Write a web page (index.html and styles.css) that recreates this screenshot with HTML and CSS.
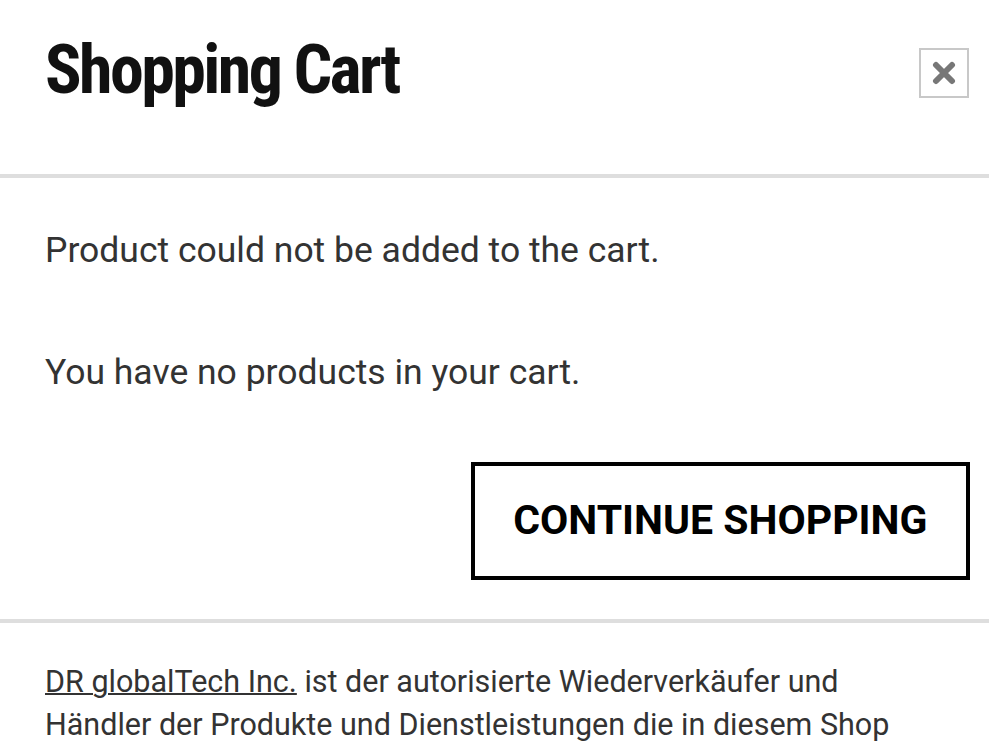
FILE: index.html
```
<!DOCTYPE html>
<html lang="en">
<head>
    <meta charset="UTF-8">
    <title>Shopping Cart</title>
    <link rel="stylesheet" href="styles.css">
</head>
<body>
    <div class="cart-modal">
        <div class="cart-header">
            <h2>Shopping Cart</h2>
            <button class="close-btn" type="button" aria-label="Close">
                <svg width="24" height="24" viewBox="0 0 24 24"><path d="M4 4L20 20M20 4L4 20" stroke="#777" stroke-width="6" stroke-linecap="round"/></svg>
            </button>
        </div>
        <div class="cart-body">
            <p class="notice">Product could not be added to the cart.</p>
            <p class="empty">You have no products in your cart.</p>
            <div class="actions">
                <a href="#" class="continue-btn">CONTINUE SHOPPING</a>
            </div>
        </div>
        <div class="cart-footer">
            <p><a href="#">DR globalTech Inc.</a> ist der autorisierte Wiederverkäufer und Händler der Produkte und Dienstleistungen die in diesem Shop angeboten werden.</p>
        </div>
    </div>
</body>
</html>
```

FILE: styles.css
```
:root { --text: #333; --line: #dedede; }
body { margin: 0; background: #fff; color: var(--text); font-family: Roboto, 'Noto Sans', sans-serif; }
.cart-modal { width: 100%; }
.cart-header { display: flex; justify-content: space-between; align-items: flex-start; height: 178px; padding: 36px 20px 0 45px; box-sizing: border-box; border-bottom: 4px solid var(--line); }
.cart-header h2 { margin: 0; font-family: Roboto, sans-serif; font-stretch: condensed; font-size: 68px; font-weight: 700; line-height: 1; letter-spacing: -2.6px; color: #111; }
.close-btn { width: 50px; height: 50px; padding: 0; margin-top: 12px; background: #fff; border: 2px solid #c8c8c8; display: flex; align-items: center; justify-content: center; cursor: pointer; }
.cart-body { padding: 45px 19px 39px 45px; }
.cart-body p { margin: 0; font-size: 35.5px; line-height: 54px; }
.cart-body .notice { margin-bottom: 68px; }
.cart-body .empty { margin-bottom: 63px; }
.actions { display: flex; justify-content: flex-end; }
.continue-btn { display: block; padding: 31px 38.5px 32px; border: 4px solid #000; color: #000; font-size: 41px; font-weight: 700; line-height: 47px; text-decoration: none; }
.cart-footer { border-top: 4px solid var(--line); padding: 37px 45px; }
.cart-footer p { margin: 0; font-size: 30.5px; line-height: 43px; }
.cart-footer a { color: var(--text); text-decoration: underline; text-decoration-thickness: 2px; }
```
